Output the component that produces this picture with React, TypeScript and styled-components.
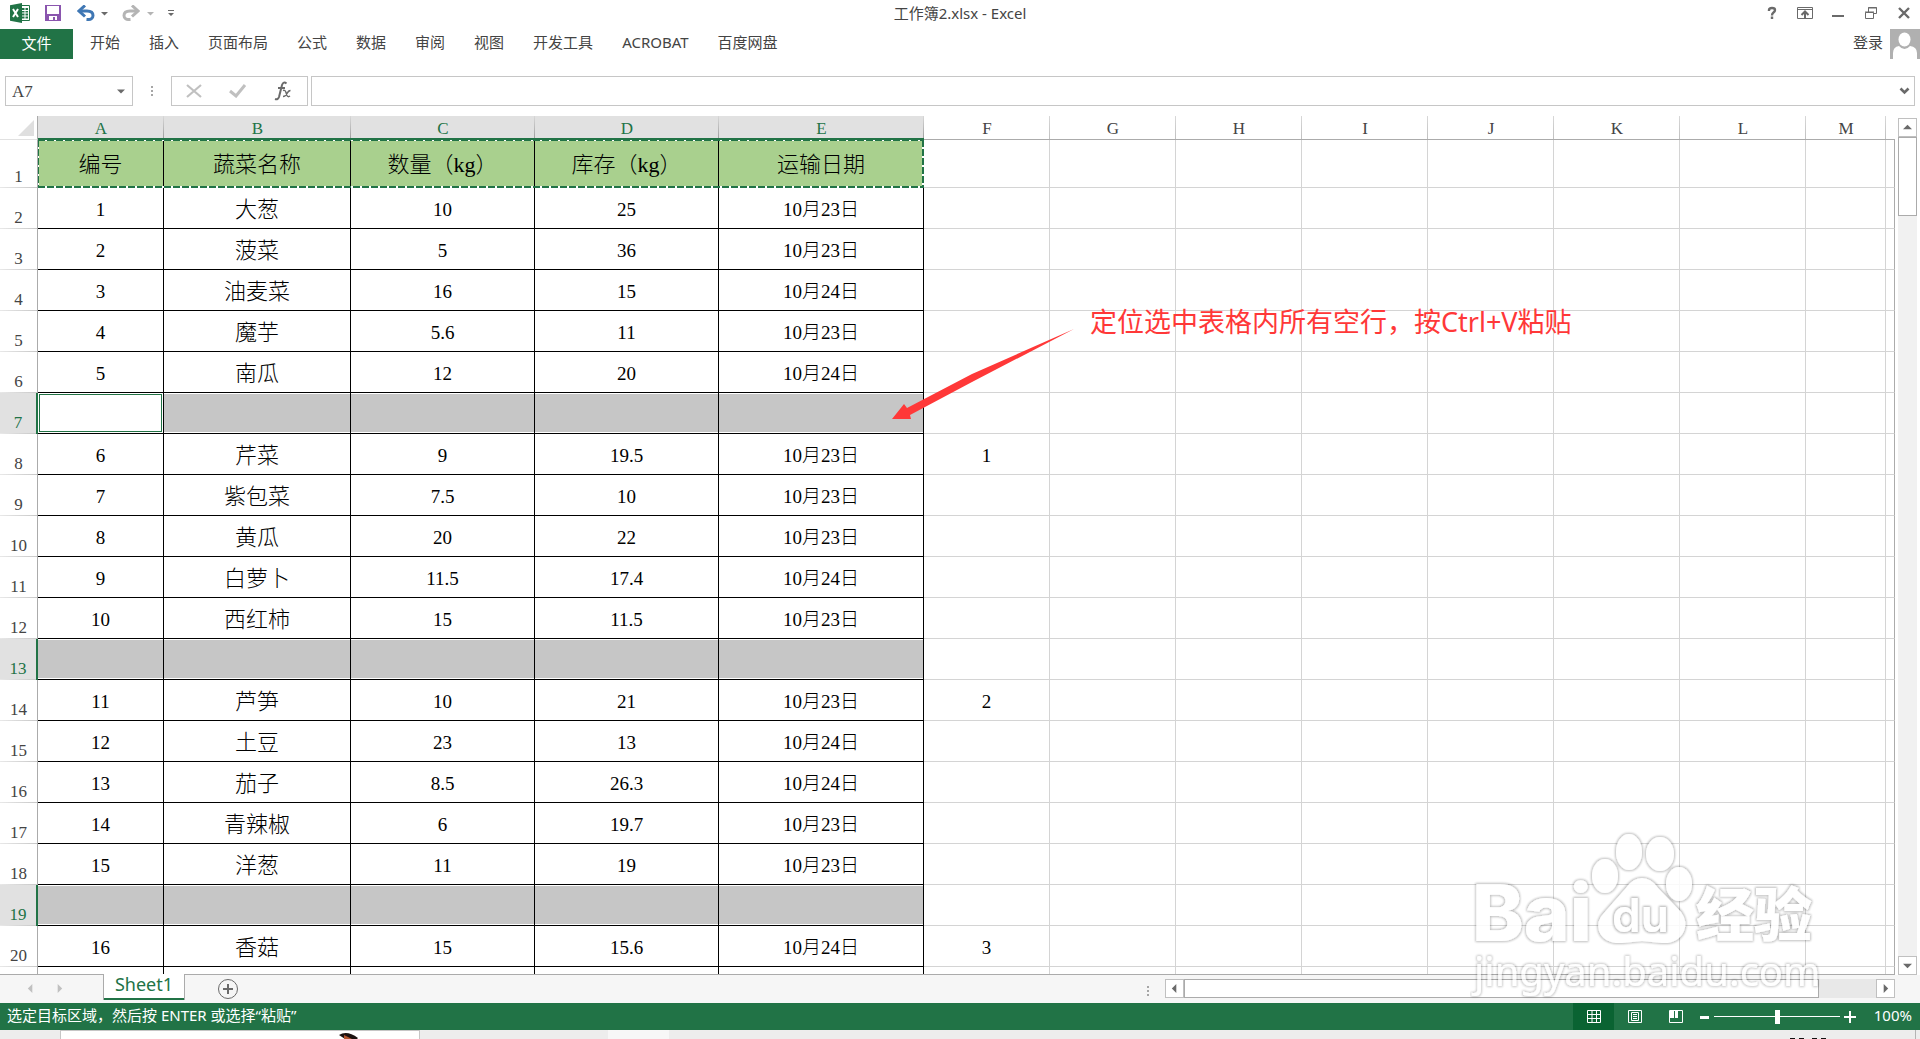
import React from "react";
import styled, { createGlobalStyle, css } from "styled-components";

const GREEN = "#217346";
const UI = `"Noto Sans", "Noto Sans CJK SC", sans-serif`;
const SONG = `"Liberation Serif", "Noto Sans CJK SC", serif`;

const Global = createGlobalStyle`
  * { box-sizing: border-box; }
  body { margin: 0; background: #fff; font-family: ${UI}; color: #444; }
  button, input { font: inherit; color: inherit; }
`;

const Window = styled.div`
  display: flex;
  flex-direction: column;
  height: 100vh;
  overflow: hidden;
`;

const PlainButton = styled.button`
  border: 0;
  padding: 0;
  background: none;
  display: flex;
  align-items: center;
  justify-content: center;
  flex: none;
`;

/* ---------- title bar ---------- */
const TitleBar = styled.header`
  display: grid;
  grid-template-columns: 1fr auto 1fr;
  align-items: center;
  height: 29px;
  padding-bottom: 3px;
  flex: none;
`;
const QuickAccess = styled.div`
  display: flex;
  align-items: center;
  padding-left: 10px;
`;
const QuickButton = styled(PlainButton)<{ $gap: number }>`
  margin-right: ${(p) => p.$gap}px;
`;
const Title = styled.h1`
  margin: 0;
  font-size: 15px;
  line-height: 20px;
  font-weight: 400;
`;
const WindowButtons = styled.div`
  display: flex;
  justify-content: flex-end;
`;
const WindowButton = styled(PlainButton)`
  width: 33px;
  height: 20px;
`;

/* ---------- ribbon ---------- */
const Ribbon = styled.nav`
  display: flex;
  height: 30px;
  flex: none;
  font-size: 15px;
  line-height: 20px;
`;
const FileTab = styled(PlainButton)`
  width: 73px;
  padding-bottom: 2px;
  background: ${GREEN};
  color: #fff;
  margin-right: 17px;
`;
const RibbonTab = styled(PlainButton)`
  margin-right: 29px;
  height: 26px;
`;
const Account = styled.div`
  margin-left: auto;
  display: flex;
  gap: 7px;
`;
const SignIn = styled(PlainButton)`
  height: 26px;
`;

/* ---------- formula bar ---------- */
const FormulaBar = styled.div`
  display: flex;
  height: 30px;
  margin: 17px 5px 10px;
  flex: none;
`;
const Framed = styled.div`
  display: flex;
  align-items: center;
  border: 1px solid #c6c6c6;
`;
const NameBox = styled(Framed)`
  width: 128px;
  padding: 0 7px 0 6px;
`;
const NameInput = styled.input`
  border: 0;
  outline: 0;
  padding: 2px 0 0;
  background: none;
  flex: 1;
  min-width: 0;
  font-family: ${SONG};
  font-size: 17px;
`;
const Dots = styled.div<{ $side: number }>`
  align-self: center;
  width: 2px;
  height: 10px;
  margin: 0 ${(p) => p.$side}px;
  flex: none;
  background: repeating-linear-gradient(#a6a6a6 0 2px, transparent 2px 4px);
`;
const FormulaButtons = styled(Framed)`
  width: 137px;
  justify-content: space-between;
  padding: 0 15px 0 14px;
  margin-right: 3px;
`;
const FormulaField = styled(Framed)`
  flex: 1;
  padding-right: 4px;
`;

/* ---------- sheet ---------- */
const Workspace = styled.main`
  display: flex;
  flex: 1;
  min-height: 0;
`;
const Sheet = styled.div`
  position: relative;
  flex: 1;
  min-width: 0;
  overflow: hidden;
  border-bottom: 1px solid #ababab;
`;
const Grid = styled.table`
  width: 100%;
  table-layout: fixed;
  border-collapse: separate;
  border-spacing: 0;
  font-family: ${SONG};
`;
const Corner = styled.td`
  padding: 0;
  height: 24px;
  border-right: 1px solid #ababab;
  border-bottom: 1px solid #e1e1e1;
  vertical-align: top;
`;
const ColumnHead = styled.th<{ $on: boolean }>`
  padding: ${(p) => (p.$on ? 4 : 3)}px 0 0;
  height: 24px;
  font-size: 17px;
  line-height: 18px;
  font-weight: 400;
  color: ${(p) => (p.$on ? GREEN : "#444")};
  border-bottom: ${(p) => (p.$on ? `2px solid ${GREEN}` : "1px solid #ababab")};
  background: linear-gradient(#d8d8d8, ${(p) => (p.$on ? "#a0a0a0" : "#c0c0c0")}) right / 1px 100% no-repeat
    ${(p) => (p.$on ? "#e1e1e1" : "#fff")};
`;
const FillHead = styled.th`
  padding: 0;
  border-bottom: 1px solid #ababab;
`;
const RowHead = styled.th<{ $on: boolean }>`
  padding: 0 0 2px;
  vertical-align: bottom;
  font-size: 17px;
  line-height: 18px;
  font-weight: 400;
  color: ${(p) => (p.$on ? GREEN : "#444")};
  border-right: ${(p) => (p.$on ? `2px solid ${GREEN}` : "1px solid #ababab")};
  background: linear-gradient(90deg, #e8e8e8, #c8c8c8) bottom / 100% 1px no-repeat
    ${(p) => (p.$on ? "#e1e1e1" : "#fff")};
`;
const Row = styled.tr<{ $h: number }>`
  height: ${(p) => p.$h}px;
`;
type CellKind = "plain" | "data" | "title" | "picked" | "active";
const Cell = styled.td<{ $kind: CellKind; $big?: boolean }>`
  padding: 3px 0 0;
  text-align: center;
  vertical-align: middle;
  white-space: nowrap;
  color: #000;
  font-weight: 300;
  font-size: ${(p) => (p.$big ? 22 : 19)}px;
  line-height: 28px;
  border-right: 1px solid ${(p) => (p.$kind === "plain" ? "#d4d4d4" : "#000")};
  border-bottom: 1px solid ${(p) => (p.$kind === "plain" ? "#d4d4d4" : "#000")};
  ${(p) => p.$kind === "title" && css`background: #a9d08e;`}
  ${(p) =>
    p.$kind === "picked" &&
    css`
      background: #c6c6c6;
      box-shadow: inset 0 1px #fff, inset 0 -1px #fff;
    `}
  ${(p) =>
    p.$kind === "active" &&
    css`
      box-shadow: inset 0 0 0 1px #fff, inset 0 0 0 2px ${GREEN};
    `}
`;
const FillCell = styled.td`
  padding: 0;
  border-right: 1px solid #ababab;
  border-bottom: 1px solid #d4d4d4;
`;

const dash = (dir: string) => `repeating-linear-gradient(${dir}, ${GREEN} 0 7px, #fff 7px 9px)`;
const CopyMarquee = styled.div`
  position: absolute;
  left: 38px;
  top: 24px;
  width: 886px;
  height: 48px;
  background:
    ${dash("90deg")} top / 100% 1px no-repeat,
    ${dash("90deg")} bottom / 100% 2px no-repeat,
    ${dash("180deg")} left / 1px 100% no-repeat,
    ${dash("180deg")} right / 2px 100% no-repeat;
`;
const Note = styled.p`
  position: absolute;
  left: 1090px;
  top: 186px;
  margin: 0;
  font-size: 27px;
  line-height: 40px;
  white-space: nowrap;
  color: #ff3838;
`;
const Arrow = styled.svg`
  position: absolute;
  left: 890px;
  top: 211px;
`;
const Watermark = styled.svg`
  position: fixed;
  right: 100px;
  bottom: 34px;
  pointer-events: none;
`;

/* ---------- scroll bars ---------- */
const VScroll = styled.div`
  display: flex;
  flex-direction: column;
  width: 19px;
  margin: 2px 3px 0;
  flex: none;
  background: #f1f1f1;
`;
const ScrollButton = styled(PlainButton)`
  width: 19px;
  height: 19px;
  background: #fff;
  border: 1px solid #c0c0c0;
`;
const VThumb = styled.div`
  height: 79px;
  background: #fff;
  border: 1px solid #ababab;
  margin-bottom: auto;
`;
const HScroll = styled.div`
  display: flex;
  width: 38vw;
  height: 19px;
  background: #e8e8e8;
`;
const HThumb = styled.div`
  width: 87%;
  background: #fff;
  border: 1px solid #ababab;
  margin-right: auto;
`;

/* ---------- bottom bars ---------- */
const SheetBar = styled.div`
  display: flex;
  height: 28px;
  flex: none;
  background: #f6f6f6;
  padding-right: 25px;
`;
const SheetNav = styled.div`
  display: flex;
  align-items: center;
  gap: 20px;
  width: 103px;
  padding: 0 0 2px 26px;
`;
const SheetTab = styled(PlainButton)`
  position: relative;
  width: 82px;
  height: 26px;
  margin-top: -1px;
  padding-bottom: 6px;
  background: #fff;
  color: ${GREEN};
  font-size: 18px;
  line-height: 20px;
  border: 1px solid #ababab;
  border-width: 0 1px;
  box-shadow: inset 0 -2px ${GREEN};
`;
const AddSheet = styled(PlainButton)`
  margin-left: 32px;
`;
const ScrollArea = styled.div`
  display: flex;
  flex: 1;
  justify-content: flex-end;
  padding-top: 4px;
  align-items: flex-start;
`;
const StatusBar = styled.footer`
  display: flex;
  align-items: center;
  height: 27px;
  flex: none;
  background: ${GREEN};
  color: #fff;
  font-size: 15px;
  line-height: 20px;
  padding: 0 8px 0 7px;
`;
const StatusText = styled.span`
  flex: 1;
  padding-bottom: 3px;
`;
const ViewButton = styled(PlainButton)<{ $on?: boolean }>`
  width: 41px;
  height: 27px;
  background: ${(p) => (p.$on ? "#0a6332" : "none")};
`;
const ZoomSlider = styled.input`
  appearance: none;
  width: 126px;
  height: 14px;
  margin: 0 4px;
  background: linear-gradient(#fff, #fff) center / 100% 1px no-repeat;
  &::-webkit-slider-thumb {
    appearance: none;
    width: 5px;
    height: 14px;
    background: #fff;
  }
`;
const ZoomValue = styled.span`
  width: 56px;
  padding-bottom: 3px;
  text-align: right;
`;
const Taskbar = styled.div`
  display: flex;
  height: 9px;
  flex: none;
  background: #ededed;
  padding: 0 4px 0 60px;
  overflow: hidden;
`;
const TaskWindow = styled.div`
  width: 360px;
  background: #fff;
  border: 1px solid #c6c6c6;
  border-bottom: 0;
  padding-left: 278px;
`;
const TaskSlot = styled.div`
  width: 61px;
  margin-left: 188px;
  background: #f7f7f7;
`;
const Tray = styled.div`
  display: flex;
  justify-content: flex-end;
  align-items: flex-end;
  margin-left: auto;
  padding-right: 88px;
  border-right: 1px solid #b4b4b4;
`;

/* ---------- data ---------- */
const columns: [string, number][] = [
  ["A", 126], ["B", 187], ["C", 184], ["D", 184], ["E", 205], ["F", 126], ["G", 126],
  ["H", 126], ["I", 126], ["J", 126], ["K", 126], ["L", 126], ["M", 80],
];
const rows: string[][] = [
  ["编号", "蔬菜名称", "数量（kg）", "库存（kg）", "运输日期"],
  ["1", "大葱", "10", "25", "10月23日"],
  ["2", "菠菜", "5", "36", "10月23日"],
  ["3", "油麦菜", "16", "15", "10月24日"],
  ["4", "魔芋", "5.6", "11", "10月23日"],
  ["5", "南瓜", "12", "20", "10月24日"],
  [],
  ["6", "芹菜", "9", "19.5", "10月23日", "1"],
  ["7", "紫包菜", "7.5", "10", "10月23日"],
  ["8", "黄瓜", "20", "22", "10月23日"],
  ["9", "白萝卜", "11.5", "17.4", "10月24日"],
  ["10", "西红柿", "15", "11.5", "10月23日"],
  [],
  ["11", "芦笋", "10", "21", "10月23日", "2"],
  ["12", "土豆", "23", "13", "10月24日"],
  ["13", "茄子", "8.5", "26.3", "10月24日"],
  ["14", "青辣椒", "6", "19.7", "10月23日"],
  ["15", "洋葱", "11", "19", "10月23日"],
  [],
  ["16", "香菇", "15", "15.6", "10月24日", "3"],
  ["", "", "", "", ""],
];
const lastRow = rows.length - 1;
const tabs = ["开始", "插入", "页面布局", "公式", "数据", "审阅", "视图", "开发工具", "ACROBAT", "百度网盘"];

const kindOf = (r: number, c: number): CellKind => {
  if (c > 4) return "plain";
  if (r === 0) return "title";
  if (rows[r].length === 0) return r === 6 && c === 0 ? "active" : "picked";
  return "data";
};

const Triangle = ({ dir, color = "#6a6a6a", s = 9 }: { dir: "up" | "down" | "left" | "right"; color?: string; s?: number }) => {
  const d = { up: "M0 7L5 2l5 5z", down: "M0 3h10L5 8z", left: "M7 0v10L2 5z", right: "M3 0v10l5-5z" }[dir];
  return (
    <svg width={s} height={s} viewBox="0 0 10 10" aria-hidden>
      <path d={d} fill={color} />
    </svg>
  );
};

export default function App() {
  return (
    <Window>
      <Global />
      <TitleBar>
        <QuickAccess>
          <QuickButton $gap={14} aria-label="Excel">
            <svg width="21" height="20" viewBox="0 0 21 20">
              <path d="M11 2.5h8.5v15H11z" fill="#fff" stroke={GREEN} />
              <path d="M12 5h2.5v2H12zM12 8h2.5v1.6H12zM12 10.6h2.5v1.8H12zM12 13.4h2.5v2H12zM15.5 5H18v2h-2.5zM15.5 8H18v1.6h-2.5zM15.5 10.6H18v1.8h-2.5zM15.5 13.4H18v2h-2.5z" fill={GREEN} />
              <path d="M0 2.3L12 0v20L0 17.7z" fill={GREEN} />
              <path d="M3 6l5 8M8 6l-5 8" stroke="#fff" strokeWidth="2" />
            </svg>
          </QuickButton>
          <QuickButton $gap={16} aria-label="保存">
            <svg width="16" height="16" viewBox="0 0 16 16">
              <path d="M0 0h16v16H0z" fill="#8a55ae" />
              <path d="M2 1h12v8H2zM4 11h8v4h-2v-3H8v3H4z" fill="#fff" />
            </svg>
          </QuickButton>
          <QuickButton $gap={6} aria-label="撤消">
            <svg width="18" height="16" viewBox="0 0 18 16" fill="none" stroke="#3f77b4" strokeWidth="3">
              <path d="M2 6h8q6 0 6 4.500T9.500 14.500" />
              <path d="M8 .5L2 6l6 5.500" />
            </svg>
          </QuickButton>
          <QuickButton $gap={14} aria-label="撤消选项"><Triangle dir="down" s={7} /></QuickButton>
          <QuickButton $gap={7} aria-label="恢复">
            <svg width="18" height="16" viewBox="0 0 18 16" fill="none" stroke="#b4b4b4" strokeWidth="3">
              <path d="M16 6H8q-6 0-6 4.500t6.500 4" />
              <path d="M10 .5L16 6l-6 5.500" />
            </svg>
          </QuickButton>
          <QuickButton $gap={14} aria-label="恢复选项"><Triangle dir="down" color="#b4b4b4" s={7} /></QuickButton>
          <QuickButton $gap={0} aria-label="自定义快速访问工具栏">
            <svg width="6" height="6" viewBox="0 0 6 6"><path d="M0 0h6v1H0zM0 3h6L3 6z" fill="#6a6a6a" /></svg>
          </QuickButton>
        </QuickAccess>
        <Title>工作簿2.xlsx - Excel</Title>
        <WindowButtons>
          <WindowButton aria-label="帮助">
            <svg width="10" height="14" viewBox="0 0 10 14" fill="none" stroke="#6a6a6a" strokeWidth="2.4">
              <path d="M2 5V4q0-2 3-2t3 2q0 1.500-1.500 2.500T5 9.500M5 10.500V13" />
            </svg>
          </WindowButton>
          <WindowButton aria-label="功能区显示选项">
            <svg width="16" height="12" viewBox="0 0 16 12" fill="none" stroke="#6a6a6a">
              <path d="M.5.5h15v11H.5zM0 2.500h16" />
              <path d="M8 11V5M4.500 8L8 4.500 11.500 8" strokeWidth="2" />
            </svg>
          </WindowButton>
          <WindowButton aria-label="最小化">
            <svg width="16" height="12" viewBox="0 0 16 12"><path d="M2 8h12v2H2z" fill="#6a6a6a" /></svg>
          </WindowButton>
          <WindowButton aria-label="还原">
            <svg width="16" height="12" viewBox="0 0 16 12" fill="none" stroke="#6a6a6a">
              <path d="M2.500 5.500h8v6h-8zM2 5h9M5.500 5V.5h8v6H11M5 1h9" />
            </svg>
          </WindowButton>
          <WindowButton aria-label="关闭">
            <svg width="12" height="12" viewBox="0 0 12 12"><path d="M1 1l10 10M11 1L1 11" stroke="#6a6a6a" strokeWidth="2.4" /></svg>
          </WindowButton>
        </WindowButtons>
      </TitleBar>

      <Ribbon>
        <FileTab>文件</FileTab>
        {tabs.map((t) => <RibbonTab key={t}>{t}</RibbonTab>)}
        <Account>
          <SignIn>登录</SignIn>
          <svg width="30" height="30" viewBox="0 0 30 30" aria-hidden>
            <path d="M0 0h30v30H0z" fill="#b0b0b0" />
            <ellipse cx="14.5" cy="10.5" rx="6" ry="7" fill="#fff" />
            <path d="M3 30V24q0-6 6-7 2.500 3 5.500 3t5.500-3q7 1 7 7v6z" fill="#fff" />
          </svg>
        </Account>
      </Ribbon>

      <FormulaBar>
        <NameBox>
          <NameInput aria-label="名称框" defaultValue="A7" />
          <Triangle dir="down" s={8} />
        </NameBox>
        <Dots $side={18} />
        <FormulaButtons>
          <PlainButton aria-label="取消">
            <svg width="16" height="14" viewBox="0 0 16 14"><path d="M1 1l14 12M15 1L1 13" stroke="#c0c0c0" strokeWidth="2.2" /></svg>
          </PlainButton>
          <PlainButton aria-label="输入">
            <svg width="18" height="14" viewBox="0 0 18 14"><path d="M1 7l6 5L16 1" fill="none" stroke="#c0c0c0" strokeWidth="3" /></svg>
          </PlainButton>
          <PlainButton aria-label="插入函数">
            <svg width="18" height="20" viewBox="0 0 18 20" fill="none" stroke="#6a6a6a">
              <path d="M12.500 2.500Q9.500 0 8 4L5 16q-1 3-4 2M4 7h7" strokeWidth="2" />
              <path d="M9 9.500q2-1 3 2l1 3q1 2 3 .5M16.500 9.500q-2 0-3.500 3t-4 3" strokeWidth="1.5" />
            </svg>
          </PlainButton>
        </FormulaButtons>
        <FormulaField>
          <NameInput aria-label="编辑栏" />
          <PlainButton aria-label="展开编辑栏">
            <svg width="11" height="8" viewBox="0 0 11 8"><path d="M1.500 1.500l4 4 4-4" fill="none" stroke="#6a6a6a" strokeWidth="2.6" /></svg>
          </PlainButton>
        </FormulaField>
      </FormulaBar>

      <Workspace>
        <Sheet>
          <Grid>
            <colgroup>
              <col width={38} />
              {columns.map(([name, w]) => <col key={name} width={w} />)}
              <col />
            </colgroup>
            <thead>
              <tr>
                <Corner>
                  <svg width="34" height="20" viewBox="0 0 34 20" display="block"><path d="M34 4v16H18z" fill="#dfdfdf" /></svg>
                </Corner>
                {columns.map(([name], i) => <ColumnHead key={name} $on={i < 5} scope="col">{name}</ColumnHead>)}
                <FillHead />
              </tr>
            </thead>
            <tbody>
              {rows.map((row, r) => (
                <Row key={r} $h={r === 0 ? 48 : 41}>
                  <RowHead $on={row.length === 0} scope="row">{r < lastRow ? r + 1 : ""}</RowHead>
                  {columns.map(([name], c) => (
                    <Cell key={name} $kind={kindOf(r, c)} $big={r === 0 || c === 1}>{row[c]}</Cell>
                  ))}
                  <FillCell />
                </Row>
              ))}
            </tbody>
          </Grid>
          <CopyMarquee />
          <Note>定位选中表格内所有空行，按Ctrl+V粘贴</Note>
          <Arrow width="186" height="94" viewBox="0 0 186 94" aria-hidden>
            <path d="M184 2L82 55 20 88 21 92H2L14 77l3 4L82 47z" fill="#ff3838" />
          </Arrow>
        </Sheet>
        <VScroll>
          <ScrollButton aria-label="向上滚动"><Triangle dir="up" /></ScrollButton>
          <VThumb />
          <ScrollButton aria-label="向下滚动"><Triangle dir="down" /></ScrollButton>
        </VScroll>
      </Workspace>

      <SheetBar>
        <SheetNav>
          <PlainButton aria-label="上一张工作表"><Triangle dir="left" color="#c0c0c0" /></PlainButton>
          <PlainButton aria-label="下一张工作表"><Triangle dir="right" color="#c0c0c0" /></PlainButton>
        </SheetNav>
        <SheetTab>Sheet1</SheetTab>
        <AddSheet aria-label="新工作表">
          <svg width="22" height="22" viewBox="0 0 22 22" fill="none" stroke="#6a6a6a">
            <circle cx="11" cy="11" r="9.5" />
            <path d="M6 11h10M11 6v10" strokeWidth="2" />
          </svg>
        </AddSheet>
        <ScrollArea>
          <Dots $side={16} />
          <HScroll>
            <ScrollButton aria-label="向左滚动"><Triangle dir="left" /></ScrollButton>
            <HThumb />
            <ScrollButton aria-label="向右滚动"><Triangle dir="right" /></ScrollButton>
          </HScroll>
        </ScrollArea>
      </SheetBar>

      <StatusBar>
        <StatusText>选定目标区域，然后按 ENTER 或选择“粘贴”</StatusText>
        <ViewButton $on aria-label="普通">
          <svg width="14" height="13" viewBox="0 0 14 13" fill="none" stroke="#fff"><path d="M.5.5h13v12H.5zM5 0v13M9.500 0v13M0 4.500h14M0 8.500h14" /></svg>
        </ViewButton>
        <ViewButton aria-label="页面布局">
          <svg width="14" height="13" viewBox="0 0 14 13" fill="none" stroke="#fff"><path d="M.5.5h13v12H.5zM3.500 2.500h7v8h-7zM5 4.500h4M5 6.500h4M5 8.500h4" /></svg>
        </ViewButton>
        <ViewButton aria-label="分页预览">
          <svg width="14" height="13" viewBox="0 0 14 13"><path d="M.5.5h13v12H.5z" fill="none" stroke="#fff" /><path d="M1 1h4v7H1zM6 1h3v7H6z" fill="#fff" /></svg>
        </ViewButton>
        <PlainButton aria-label="缩小">
          <svg width="14" height="14" viewBox="0 0 14 14"><path d="M4 6h9v3H4z" fill="#fff" /></svg>
        </PlainButton>
        <ZoomSlider type="range" aria-label="缩放" min={0} max={100} defaultValue={50} />
        <PlainButton aria-label="放大">
          <svg width="12" height="14" viewBox="0 0 12 14"><path d="M0 6h12v2H0zM5 1h2v12H5z" fill="#fff" /></svg>
        </PlainButton>
        <ZoomValue>100%</ZoomValue>
      </StatusBar>

      <Taskbar>
        <TaskWindow>
          <svg width="20" height="8" viewBox="0 0 20 8" display="block" aria-hidden>
            <path d="M0 4Q8-1 19 7l-1 1H6z" fill="#1c1210" />
            <path d="M5 4l8 4H5z" fill="#b4552f" />
          </svg>
        </TaskWindow>
        <TaskSlot />
        <Tray>
          <svg width="38" height="1" viewBox="0 0 38 1" display="block" aria-hidden>
            <path d="M1 0h5v1H1zM10 0h5v1h-5zM23 0h5v1h-5zM32 0h5v1h-5z" fill="#111" />
          </svg>
        </Tray>
      </Taskbar>

      <Watermark width="350" height="175" viewBox="0 0 350 175" aria-hidden>
        <defs>
          <filter id="halo" x="-5%" y="-5%" width="110%" height="110%">
            <feMorphology in="SourceAlpha" operator="dilate" radius="1" />
            <feGaussianBlur stdDeviation="1" />
            <feComponentTransfer result="soft"><feFuncA type="linear" slope="0.3" /></feComponentTransfer>
            <feMerge><feMergeNode in="soft" /><feMergeNode in="SourceGraphic" /></feMerge>
          </filter>
        </defs>
        <g filter="url(#halo)" fill="#fff" opacity="0.85" fontFamily="Inter, sans-serif">
          <text x="2" y="111" fontSize="78" fontWeight="800">Bai</text>
          <ellipse cx="135" cy="46" rx="13" ry="17" />
          <ellipse cx="159" cy="22" rx="13" ry="18" />
          <ellipse cx="190" cy="24" rx="14" ry="17" />
          <ellipse cx="209" cy="54" rx="13" ry="17" />
          <path d="M172 48Q181 48 188 58L211 82Q218 92 214 101 208 114 192 113L172 111 152 113Q134 114 129 101 126 91 134 83L156 58Q163 48 172 48z" />
          <text x="226" y="106" fontSize="58" fontWeight="900" fontFamily="Noto Sans CJK SC, sans-serif">经验</text>
        </g>
        <g filter="url(#halo)" fill="#fff">
          <text x="142" y="102" fontSize="46" fontWeight="600" fontFamily="Inter, sans-serif">du</text>
        </g>
        <g filter="url(#halo)" fill="#fff" opacity="0.7">
          <text x="4" y="156" fontSize="40" fontFamily="Noto Sans, sans-serif">jingyan.baidu.com</text>
        </g>
      </Watermark>
    </Window>
  );
}
